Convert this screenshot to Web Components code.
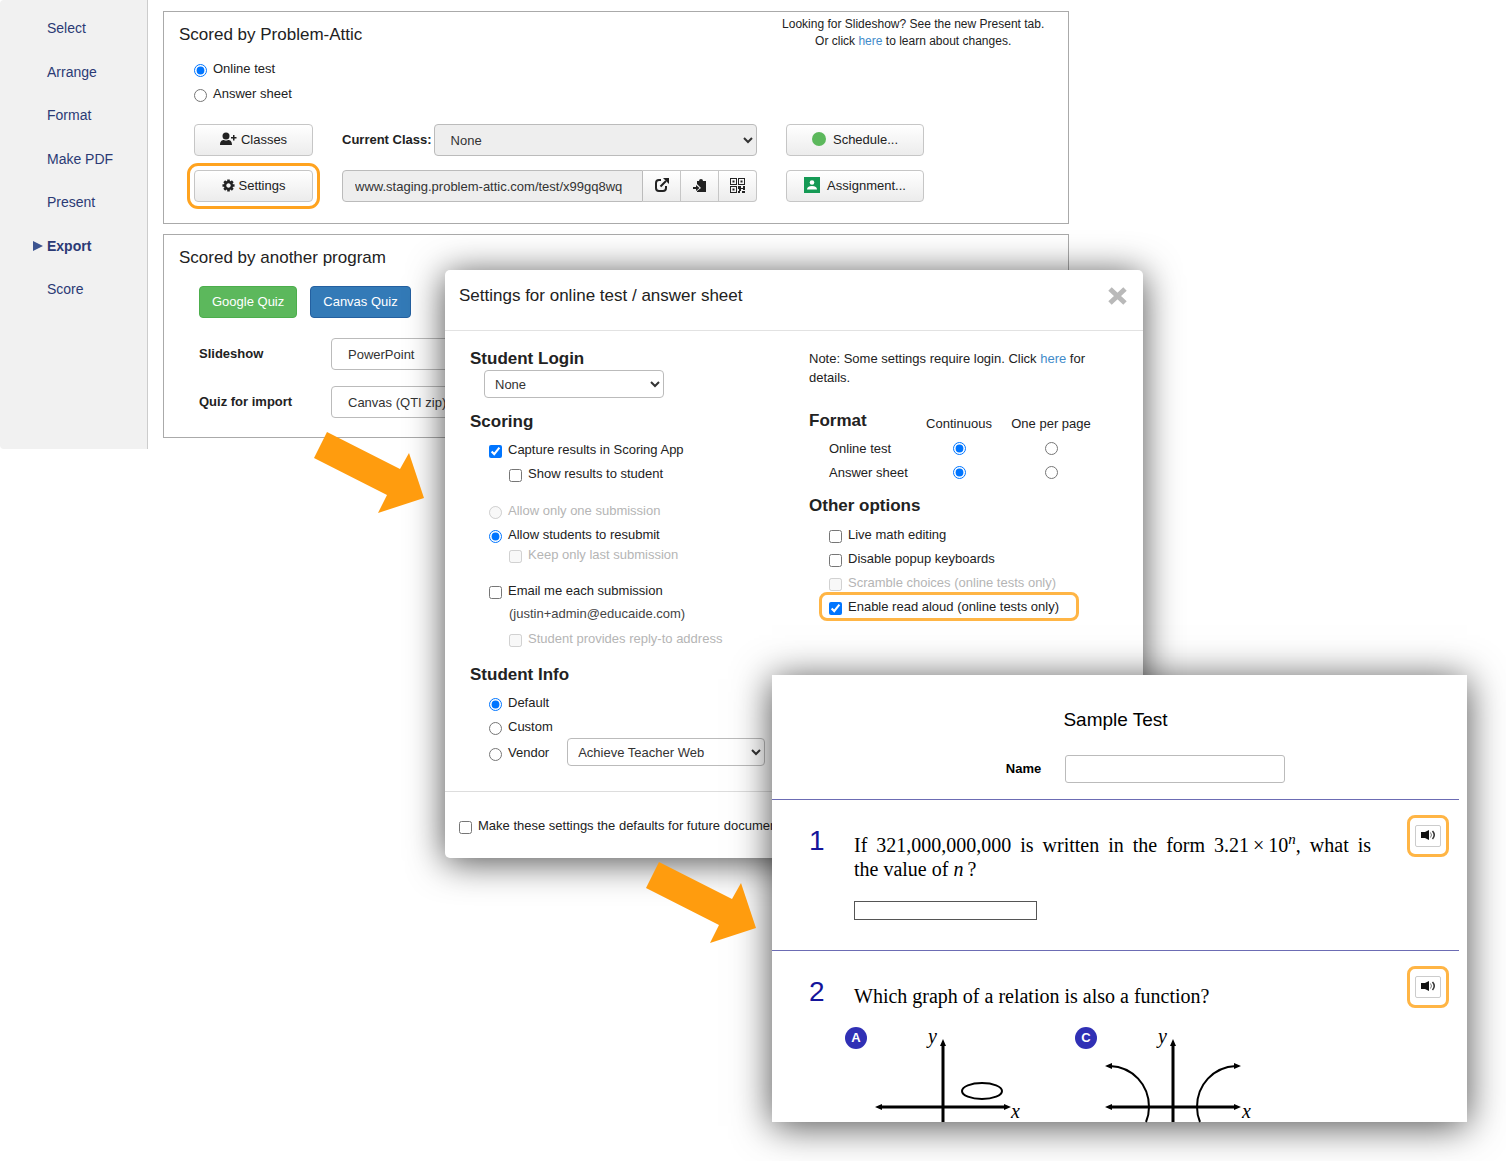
<!DOCTYPE html>
<html lang="en">
<head>
<meta charset="utf-8">
<title>Problem-Attic: read aloud</title>
<style>
  body {
    margin: 0;
    background: #fff;
    color: #222;
    font: 13px/17px "Liberation Sans", Arial, sans-serif;
  }
</style>
</head>
<body>

<read-aloud-tour></read-aloud-tour>

<!-- side menu -->
<template id="side-menu">
  <style>
    :host { display: block; flex: none; width: 147px; background: #f1f1f1; border-right: 1px solid #ccc; border-radius: 4px 0 0 4px; }
    nav { box-sizing: border-box; height: 100%; padding: 20px 0 152px 47px; display: flex; flex-direction: column; justify-content: space-between; }
    a { color: #2b3a75; font-size: 14px; line-height: 16px; text-decoration: none; }
    a.current { font-weight: bold; display: flex; align-items: center; margin-left: -14px; gap: 4px; }
    svg { fill: #3c5490; }
  </style>
  <nav>
    <a href="#select">Select</a>
    <a href="#arrange">Arrange</a>
    <a href="#format">Format</a>
    <a href="#pdf">Make PDF</a>
    <a href="#present">Present</a>
    <a href="#export" class="current"><svg width="10" height="10"><path d="M0 0L10 5L0 10z"/></svg>Export</a>
    <a href="#score">Score</a>
  </nav>
</template>

<!-- bordered panel with a title and an optional note -->
<template id="titled-panel">
  <style>
    :host { display: block; border: 1px solid #aaa; background: #fff; }
    header { display: flex; justify-content: space-between; padding: 4px 24px 0 15px; }
    h2 { margin: 9px 0 0; font-size: 17px; line-height: 20px; font-weight: normal; }
  </style>
  <header>
    <h2><slot name="title"></slot></h2>
    <slot name="note"></slot>
  </header>
  <slot></slot>
</template>

<!-- radio or tick box with its label -->
<template id="choice-row">
  <style>
    :host { display: flex; align-items: center; gap: 6px; min-height: 24px; }
    :host([sub]) { margin-left: 20px; }
    :host([tight]) { min-height: 14px; line-height: 14px; }
    :host([off]) { color: #b5b5b5; }
    ::slotted(input) { flex: none; width: 13px; height: 13px; margin: 4px 0 0; accent-color: #0075ff; }
  </style>
  <slot></slot>
</template>

<template id="push-button">
  <style>
    :host { display: block; }
    button {
      box-sizing: border-box; width: 100%; height: 32px; padding: 0 12px 2px;
      display: flex; align-items: center; justify-content: center; gap: 4px;
      font: inherit; color: #222; cursor: pointer;
      background: linear-gradient(#fff, #ececec); border: 1px solid #c6c6c6; border-radius: 4px;
    }
    :host([wide]) button { gap: 7px; }
    :host([green]) button { color: #fff; background: #5cb85c; border-color: #4cae4c; }
    :host([blue]) button { color: #fff; background: #337ab7; border-color: #2460a0; }
    :host([marked]) button { outline: 3px solid #ffa31f; outline-offset: 4px; }
  </style>
  <button type="button"><slot></slot></button>
</template>

<!-- orange frame round something worth a look -->
<template id="mark-frame">
  <style>
    :host { display: flex; box-sizing: border-box; border: 3px solid #ffb545; border-radius: 8px; align-items: center; }
  </style>
  <slot></slot>
</template>

<template id="speak-button">
  <style>
    :host { display: block; }
    mark-frame { width: 42px; height: 42px; justify-content: center; }
    button { width: 26px; height: 22px; padding: 0 0 2px; display: flex; align-items: center; justify-content: center; background: #fff; border: 1px solid #ccc; border-radius: 2px; }
  </style>
  <mark-frame>
    <button type="button" aria-label="Read aloud">
      <svg width="15" height="10" viewBox="0 0 15 10">
        <path d="M0 2h4l4-2v10l-4-2H0z" fill="#111"/>
        <path d="M9.500 2.500q2 2.500 0 5" fill="none" stroke="#777"/>
        <path d="M11.500 1q3.500 4 0 8" fill="none" stroke="#333" stroke-width="1.500"/>
      </svg>
    </button>
  </mark-frame>
</template>

<template id="step-arrow">
  <style>
    :host { display: block; }
    svg { display: block; }
  </style>
  <svg width="110" height="81"><path d="M13 0L86 37L95 21L110 66L64 81L73 63L0 26z" fill="#ff9c0e"/></svg>
</template>

<!-- Export tab -->
<template id="export-page">
  <style>
    :host { display: flex; gap: 15px; }
    main { flex: 1; display: flex; flex-direction: column; gap: 10px; padding: 11px 0; }
    a { color: #428bca; text-decoration: none; }
    .note { margin: 0; font-size: 12px; text-align: center; }
    .choices { padding: 6px 0 0 30px; }
    choice-row { min-height: 25px; }
    .tools { display: grid; grid-template-columns: 119px 415px 138px; gap: 14px 29px; padding: 18px 20px 21px 30px; }
    .line { display: flex; align-items: center; }
    .line label, .fields label { font-weight: bold; padding-bottom: 2px; }
    .line select { flex: 1; margin-left: 2px; background: #eee; }
    select, .line input {
      box-sizing: border-box; height: 32px; min-width: 0; padding: 0 12px; font: inherit; color: #333;
      border: 1px solid #bbb; border-radius: 4px; background: #fff;
    }
    .line input { flex: 1; background: #eee; border-radius: 4px 0 0 4px; }
    .line button {
      width: 38px; height: 32px; padding: 0 0 2px; border: 1px solid #c6c6c6; border-left-width: 0;
      background: linear-gradient(#fff, #ececec);
      display: flex; align-items: center; justify-content: center;
    }
    .line button:last-child { border-radius: 0 4px 4px 0; }
    .dot { width: 14px; height: 14px; border-radius: 50%; background: #5cb85c; }
    .quiz { display: flex; gap: 13px; padding: 18px 0 20px 35px; }
    .fields { display: grid; grid-template-columns: 132px 320px; gap: 16px 0; align-items: center; padding: 0 0 19px 35px; }
  </style>
  <side-menu></side-menu>
  <main>
    <titled-panel>
      <span slot="title">Scored by Problem-Attic</span>
      <p slot="note" class="note">Looking for Slideshow? See the new Present tab.<br>Or click <a href="#changes">here</a> to learn about changes.</p>
      <div class="choices">
        <choice-row><input type="radio" name="kind" id="kind-test" checked><label for="kind-test">Online test</label></choice-row>
        <choice-row><input type="radio" name="kind" id="kind-sheet"><label for="kind-sheet">Answer sheet</label></choice-row>
      </div>
      <div class="tools">
        <push-button>
          <svg width="17" height="14" viewBox="0 0 17 14" fill="#222"><circle cx="6" cy="4" r="3.500"/><path d="M0 13c0-4 2-5 4-5q2 1 4 0c2 0 4 1 4 5zM13 3h1.500v2h2v1.500h-2v2H13v-2h-2V5h2z"/></svg>
          Classes
        </push-button>
        <div class="line">
          <label for="class">Current Class:</label>
          <select id="class"><option>None</option></select>
        </div>
        <push-button wide><span class="dot"></span>Schedule...</push-button>

        <push-button marked>
          <svg width="13" height="13" viewBox="-7 -7 14 14"><circle r="3.700" fill="none" stroke="#222" stroke-width="2.600"/><path d="M0-6.500V-4M0 6.500V4M-6.500 0H-4M6.500 0H4M-4.600-4.600L-3-3M4.600 4.600L3 3M-4.600 4.600L-3 3M4.600-4.600L3-3" stroke="#222" stroke-width="2.800"/></svg>
          Settings
        </push-button>
        <div class="line">
          <input type="text" aria-label="Test address" value="www.staging.problem-attic.com/test/x99gq8wq" readonly>
          <button type="button" aria-label="Open">
            <svg width="14" height="14" viewBox="0 0 14 14" fill="none" stroke="#222" stroke-width="2"><path d="M6 2H4Q1 2 1 5v5q0 3 3 3h4q3 0 3-3V8"/><path d="M5.500 8.500L11 3"/><path d="M8 0h6v6z" fill="#222" stroke="none"/></svg>
          </button>
          <button type="button" aria-label="Copy">
            <svg width="13" height="13" viewBox="0 0 13 13" fill="#222"><path d="M4 2h2q0-2 2-2t2 2h3v11H4v-1l4-3-4-4zM0 8h3V6l3.500 3L3 12v-2H0z"/></svg>
          </button>
          <button type="button" aria-label="QR code">
            <svg width="15" height="15" viewBox="0 0 15 15" fill="#222"><path d="M0 0h7v7H0zM1 1v5h5V1zM8 0h7v7H8zM9 1v5h5V1zM0 8h7v7H0zM1 9v5h5V9z" fill-rule="evenodd"/><path d="M2.500 2.500h2v2h-2zM10.500 2.500h2v2h-2zM2.500 10.500h2v2h-2zM8 8h3v2h2V8h2v4h-2v-1h-2v2H9v-2H8zM8 13h2v2H8zM12 13h3v2h-3z"/></svg>
          </button>
        </div>
        <push-button wide>
          <svg width="16" height="16" viewBox="0 0 16 16"><path d="M0 0h16v16H0z" fill="#159a55"/><circle cx="8" cy="5.500" r="2.300" fill="#fff"/><path d="M3 12.500q0-3.500 5-3.500t5 3.500z" fill="#fff"/></svg>
          Assignment...
        </push-button>
      </div>
    </titled-panel>

    <titled-panel>
      <span slot="title">Scored by another program</span>
      <div class="quiz">
        <push-button green>Google Quiz</push-button>
        <push-button blue>Canvas Quiz</push-button>
      </div>
      <div class="fields">
        <label for="slideshow">Slideshow</label>
        <select id="slideshow"><option>PowerPoint</option></select>
        <label for="import">Quiz for import</label>
        <select id="import"><option>Canvas (QTI zip)</option></select>
      </div>
    </titled-panel>
  </main>
</template>

<!-- Settings window -->
<template id="settings-window">
  <style>
    :host { display: block; background: #fff; border-radius: 5px; box-shadow: 0 4px 36px rgba(0, 0, 0, .7); }
    header { display: flex; justify-content: space-between; align-items: center; height: 52px; padding: 0 16px 8px 14px; border-bottom: 1px solid #e2e2e2; }
    h2 { margin: 0; font-size: 17px; line-height: 20px; font-weight: normal; }
    header button { padding: 0; border: 0; background: none; display: flex; }
    a { color: #428bca; text-decoration: none; }
    .body { display: grid; grid-template-columns: 339px 1fr; padding: 17px 40px 25px 25px; }
    h3 { margin: 0; font-size: 17px; line-height: 22px; }
    section { padding-left: 19px; }
    select { box-sizing: border-box; height: 28px; padding: 0 6px; font: inherit; color: #333; background: #fff; border: 1px solid #bbb; border-radius: 4px; }
    #login { display: block; width: 180px; margin: 0 0 13px 14px; }
    .scoring, .info { padding-top: 4px; }
    .apart { margin-top: 13px; }
    .mail { margin-top: 15px; }
    .address { margin-left: 20px; line-height: 24px; color: #444; }
    .scoring { margin-bottom: 14px; }
    .vendor { display: flex; align-items: center; gap: 18px; }
    .note { margin: 0; padding: 1px 0 23px; line-height: 19px; }
    table { border-collapse: collapse; margin-bottom: 11px; }
    th, td { padding: 0; height: 24px; font-weight: normal; text-align: center; width: 92px; }
    thead th { height: 26px; vertical-align: middle; }
    th:first-child { width: 84px; padding-left: 20px; text-align: left; }
    thead th:first-child { padding-left: 0; vertical-align: top; }
    td input { display: block; width: 13px; height: 13px; margin: 0 auto; accent-color: #0075ff; }
    .other { padding-left: 20px; padding-top: 5px; }
    mark-frame { width: 260px; margin: -2px 0 0 -10px; padding-left: 7px; height: 29px; }
    footer { display: flex; align-items: center; height: 66px; padding-left: 14px; border-top: 1px solid #ddd; }
  </style>
  <header>
    <h2>Settings for online test / answer sheet</h2>
    <button type="button" aria-label="Close"><svg width="19" height="18" viewBox="0 0 19 18"><path d="M2 2L17 16M17 2L2 16" stroke="#b9b9b9" stroke-width="5"/></svg></button>
  </header>
  <div class="body">
    <div>
      <h3><label for="login">Student Login</label></h3>
      <select id="login"><option>None</option></select>

      <h3>Scoring</h3>
      <section class="scoring">
        <choice-row><input type="checkbox" id="capture" checked><label for="capture">Capture results in Scoring App</label></choice-row>
        <choice-row sub><input type="checkbox" id="show"><label for="show">Show results to student</label></choice-row>
        <choice-row off class="apart"><input type="radio" name="submit" id="once" disabled><label for="once">Allow only one submission</label></choice-row>
        <choice-row><input type="radio" name="submit" id="again" checked><label for="again">Allow students to resubmit</label></choice-row>
        <choice-row sub tight off><input type="checkbox" id="last" disabled><label for="last">Keep only last submission</label></choice-row>
        <choice-row class="mail"><input type="checkbox" id="mail"><label for="mail">Email me each submission</label></choice-row>
        <div class="address">(justin+admin@educaide.com)</div>
        <choice-row sub off><input type="checkbox" id="reply" disabled><label for="reply">Student provides reply-to address</label></choice-row>
      </section>

      <h3>Student Info</h3>
      <section class="info">
        <choice-row><input type="radio" name="info" id="info-default" checked><label for="info-default">Default</label></choice-row>
        <choice-row><input type="radio" name="info" id="info-custom"><label for="info-custom">Custom</label></choice-row>
        <div class="vendor">
          <choice-row><input type="radio" name="info" id="info-vendor"><label for="info-vendor">Vendor</label></choice-row>
          <select aria-label="Vendor name" style="width: 198px"><option>Achieve Teacher Web</option></select>
        </div>
      </section>
    </div>

    <div>
      <p class="note">Note: Some settings require login. Click <a href="#login-help">here</a> for<br>details.</p>
      <table>
        <thead>
          <tr><th><h3>Format</h3></th><th scope="col">Continuous</th><th scope="col">One per page</th></tr>
        </thead>
        <tbody>
          <tr>
            <th scope="row">Online test</th>
            <td><input type="radio" name="test" aria-label="Online test, continuous" checked></td>
            <td><input type="radio" name="test" aria-label="Online test, one per page"></td>
          </tr>
          <tr>
            <th scope="row">Answer sheet</th>
            <td><input type="radio" name="sheet" aria-label="Answer sheet, continuous" checked></td>
            <td><input type="radio" name="sheet" aria-label="Answer sheet, one per page"></td>
          </tr>
        </tbody>
      </table>

      <h3>Other options</h3>
      <section class="other">
        <choice-row><input type="checkbox" id="math"><label for="math">Live math editing</label></choice-row>
        <choice-row><input type="checkbox" id="keys"><label for="keys">Disable popup keyboards</label></choice-row>
        <choice-row off><input type="checkbox" id="scramble" disabled><label for="scramble">Scramble choices (online tests only)</label></choice-row>
        <mark-frame>
          <choice-row><input type="checkbox" id="aloud" checked><label for="aloud">Enable read aloud (online tests only)</label></choice-row>
        </mark-frame>
      </section>
    </div>
  </div>
  <footer>
    <choice-row><input type="checkbox" id="defaults"><label for="defaults">Make these settings the defaults for future documents</label></choice-row>
  </footer>
</template>

<!-- one numbered question -->
<template id="test-question">
  <style>
    :host { display: grid; grid-template-columns: 45px 1fr 42px; padding: 15px 10px 0 37px; border-top: 1px solid #6c6cb4; color: #000; }
    .number { padding-top: 14px; font-size: 28px; line-height: 24px; color: #15159a; }
    .text { padding-top: 18px; font: 20px/24px "Liberation Serif", "Times New Roman", serif; }
  </style>
  <div class="number"><slot name="number"></slot></div>
  <div class="text"><slot></slot></div>
  <speak-button></speak-button>
</template>

<!-- answer letter with its graph -->
<template id="graph-choice">
  <style>
    :host { display: flex; width: 230px; }
    button { flex: none; width: 22px; height: 22px; padding: 0; border: 0; border-radius: 50%; background: #3030b5; color: #fff; font: bold 13px/22px "Liberation Sans", Arial, sans-serif; }
  </style>
  <button type="button"><slot name="letter"></slot></button>
  <slot></slot>
</template>

<!-- Sample test window -->
<template id="sample-test">
  <style>
    :host { display: block; box-sizing: border-box; padding-right: 8px; background: #fff; color: #000; box-shadow: 0 4px 36px rgba(0, 0, 0, .7); }
    h1 { margin: 0; padding-top: 33px; font-size: 19px; line-height: 24px; font-weight: normal; text-align: center; }
    .name { display: flex; justify-content: center; align-items: center; gap: 24px; padding: 23px 0 16px 60px; }
    .name label { font-weight: bold; padding-bottom: 2px; }
    .name input { box-sizing: border-box; width: 220px; height: 28px; border: 1px solid #bbb; border-radius: 3px; }
    p { margin: 0 36px 0 0; }
    .first { text-align: justify; }
    sup { font-size: 15px; line-height: 0; }
    .answer { display: block; box-sizing: border-box; width: 183px; height: 19px; margin: 20px 0 30px; border: 1px solid #555; }
    .graphs { display: flex; margin: 19px 0 0 -9px; }
    svg { display: block; overflow: visible; font: italic 20px "Liberation Serif", "Times New Roman", serif; }
    .axis, .curve { fill: none; stroke: #000; stroke-width: 3; }
    .curve { stroke-width: 2; }
  </style>
  <h1>Sample Test</h1>
  <div class="name"><label for="name">Name</label><input type="text" id="name"></div>

  <test-question>
    <span slot="number">1</span>
    <p class="first">If 321,000,000,000 is written in the form 3.21&#8239;×&#8239;10<sup><i>n</i></sup>, what is the&nbsp;value of <i>n</i>&#8239;?</p>
    <input class="answer" type="text" aria-label="Answer">
  </test-question>

  <test-question>
    <span slot="number">2</span>
    <p>Which graph of a relation is also a function?</p>
    <div class="graphs">
      <graph-choice>
        <span slot="letter">A</span>
        <svg width="160" height="95">
          <path class="axis" d="M76 17V95M13 80H139"/>
          <path d="M76 12l3 7h-6zM8 80l7-3v6zM144 80l-7-3v6z"/>
          <ellipse class="curve" cx="115" cy="64" rx="20" ry="8"/>
          <text x="61" y="16">y</text><text x="144" y="91">x</text>
        </svg>
      </graph-choice>
      <graph-choice>
        <span slot="letter">C</span>
        <svg width="160" height="95">
          <path class="axis" d="M76 17V95M13 80H139"/>
          <path d="M76 12l3 7h-6zM8 80l7-3v6zM144 80l-7-3v6zM8 39l7-3v6zM144 39l-7-3v6z"/>
          <path class="curve" d="M13 39C36 40 52 58 52 80Q52 88 49 95M139 39C116 40 100 58 100 80Q100 88 103 95"/>
          <text x="61" y="16">y</text><text x="145" y="91">x</text>
        </svg>
      </graph-choice>
    </div>
  </test-question>
</template>

<!-- the three windows and the arrows between them -->
<template id="read-aloud-tour">
  <style>
    :host { display: block; position: relative; min-height: 100vh; overflow: hidden; }
    export-page { width: 71%; }
    settings-window, sample-test, step-arrow { position: absolute; }
    settings-window { left: 445px; right: 363px; top: 270px; }
    sample-test { left: 772px; right: 39px; top: 675px; }
    .to-settings { left: 314px; top: 432px; }
    .to-test { left: 646px; top: 862px; }
  </style>
  <export-page></export-page>
  <settings-window></settings-window>
  <sample-test></sample-test>
  <step-arrow class="to-settings"></step-arrow>
  <step-arrow class="to-test"></step-arrow>
</template>

<script>
// every template becomes a custom element with the same name
document.querySelectorAll('template').forEach(tmpl => {
  customElements.define(tmpl.id, class extends HTMLElement {
    constructor() {
      super();
      this.attachShadow({mode: 'open'});
      this.shadowRoot.append(tmpl.content.cloneNode(true));
    }
  });
});
</script>
</body>
</html>
